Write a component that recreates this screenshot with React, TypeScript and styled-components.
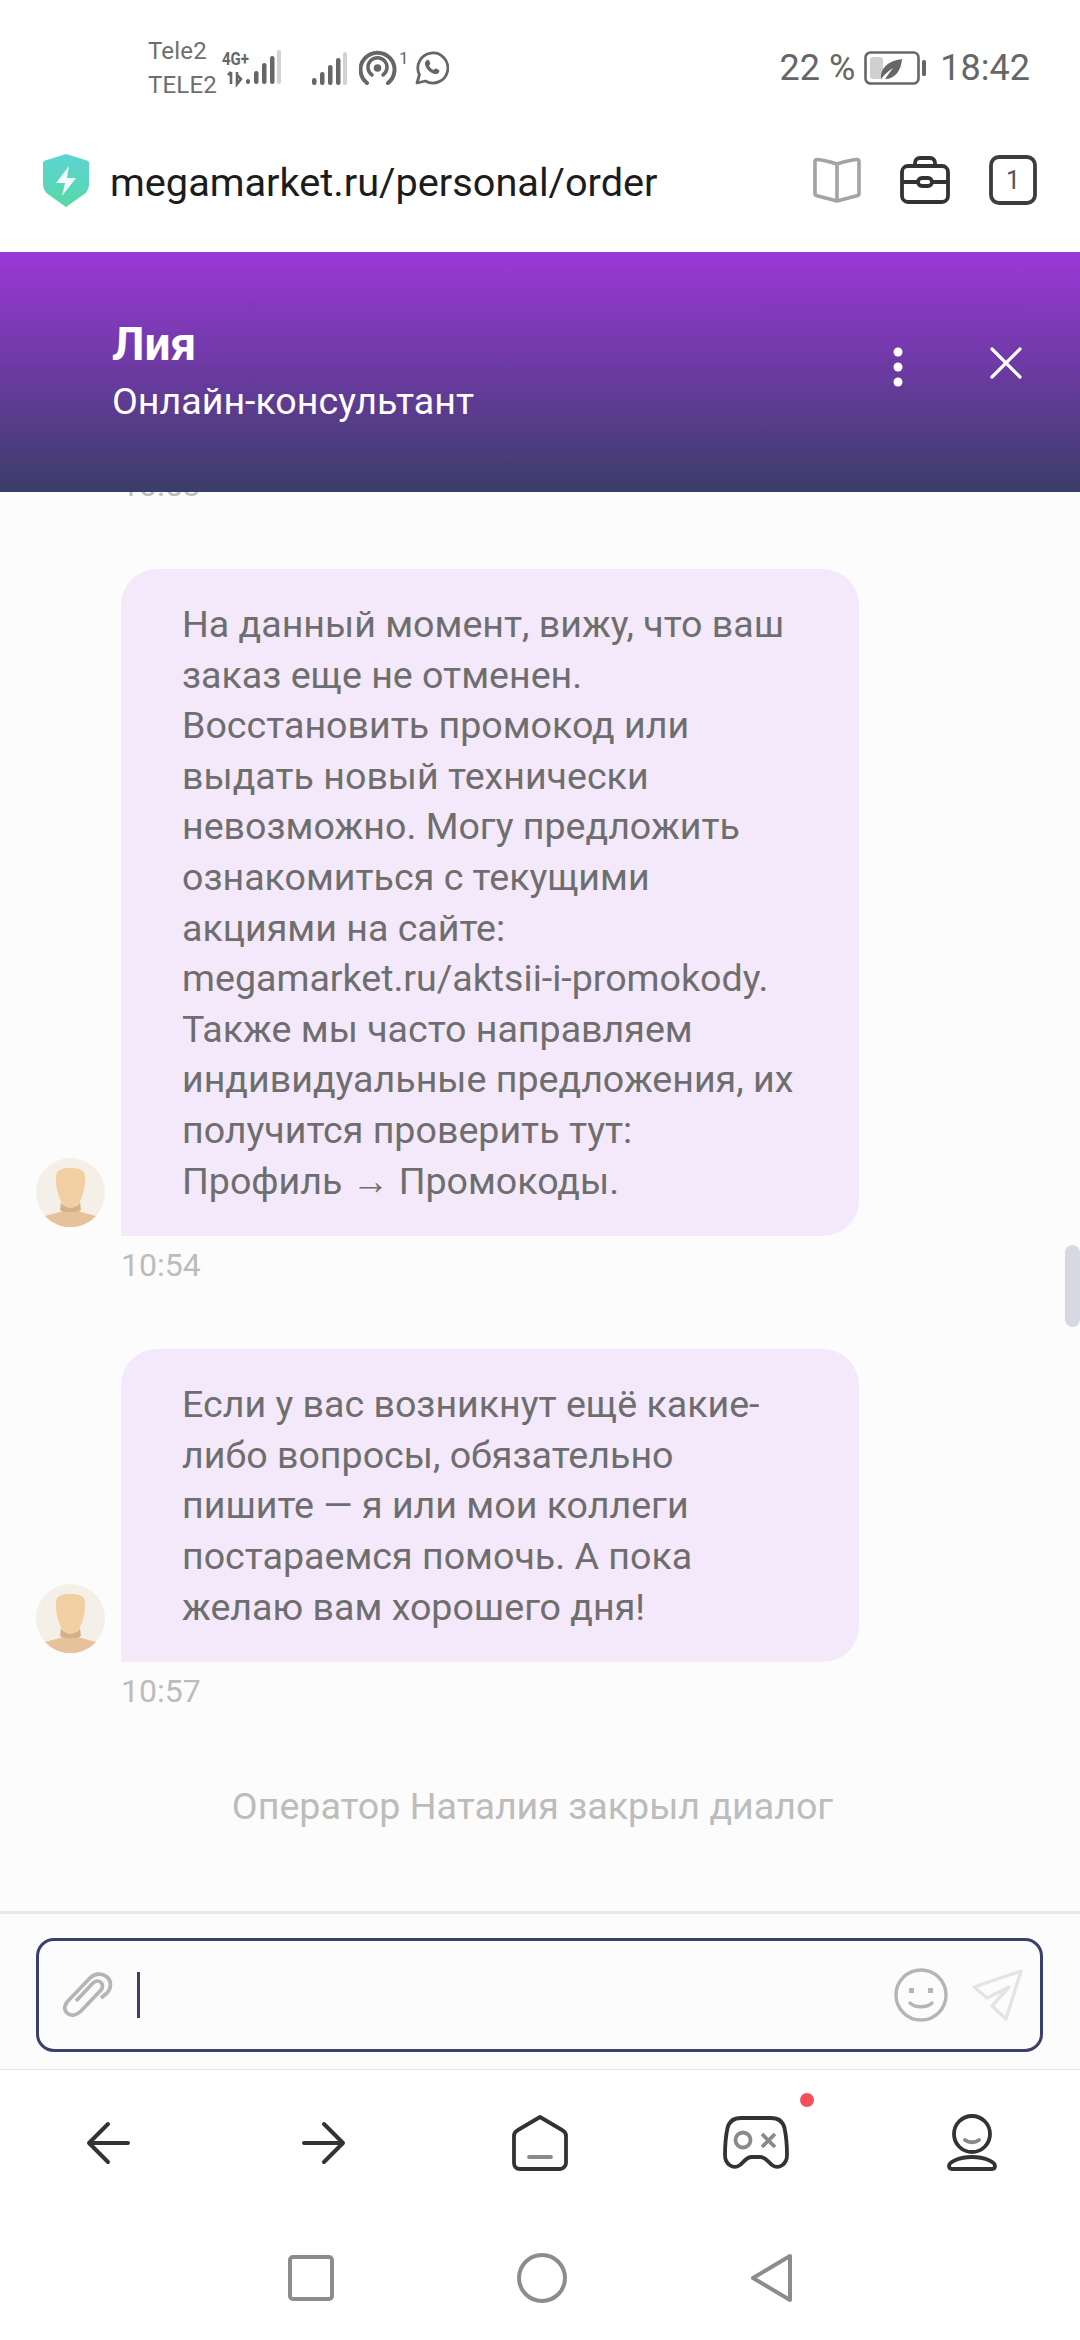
import React from "react";
import styled, { createGlobalStyle } from "styled-components";

const GlobalStyle = createGlobalStyle`
  html, body {
    margin: 0;
    padding: 0;
    background: #fff;
  }
  * {
    box-sizing: border-box;
  }
`;

const Screen = styled.div`
  width: 1080px;
  height: 2340px;
  display: flex;
  flex-direction: column;
  overflow: hidden;
  background: #fff;
  font-family: Roboto, "Liberation Sans", sans-serif;
`;

const StatusBar = styled.div`
  height: 108px;
  flex: none;
  padding: 28px 50px 0 148px;
  display: flex;
  align-items: center;
  color: #666;
`;

const Carriers = styled.div`
  width: 74px;
  font-size: 24px;
  line-height: 34px;
  color: #6e6e6e;
  letter-spacing: 0.2px;
`;

const StatusIcon = styled.svg<{ $left?: number }>`
  display: block;
  flex: none;
  margin-left: ${(p) => p.$left ?? 0}px;
`;

const StatusRight = styled.div`
  margin-left: auto;
  display: flex;
  align-items: center;
  font-size: 36px;
  color: #666;
`;

const Percent = styled.span`
  margin-right: 9px;
`;

const Clock = styled.span`
  margin-left: 14px;
`;

const AddressBar = styled.div`
  height: 144px;
  flex: none;
  padding: 0 43px;
  display: flex;
  align-items: center;
`;

const Url = styled.div`
  margin: 4px 0 0 21px;
  font-size: 39.7px;
  color: #1c1c1c;
  flex: 1;
  white-space: nowrap;
`;

const AddressTools = styled.div`
  display: flex;
  align-items: center;
  gap: 39px;
`;

const ChatHeader = styled.div`
  height: 240px;
  flex: none;
  padding: 0 58px 0 112px;
  display: flex;
  align-items: center;
  background: linear-gradient(180deg, #9b38d8 0%, #3a3d69 100%);
  color: #fff;
`;

const AgentInfo = styled.div`
  flex: 1;
`;

const AgentName = styled.div`
  font-size: 46px;
  line-height: 56px;
  font-weight: 700;
`;

const AgentRole = styled.div`
  margin-top: 2px;
  font-size: 37.6px;
  line-height: 54px;
`;

const HeaderActions = styled.div`
  display: flex;
  align-items: flex-start;
  gap: 87px;
  margin-bottom: 10px;
`;

const Chat = styled.div`
  position: relative;
  flex: 1;
  min-height: 0;
  overflow: hidden;
  background: #fcfcfc;
`;

const MessageList = styled.div`
  margin-top: -26px;
`;

const Row = styled.div`
  display: flex;
  align-items: flex-end;
  padding-left: 36px;
  gap: 16px;
`;

const AvatarIcon = styled.svg`
  display: block;
  flex: none;
  margin-bottom: 9px;
`;

const Bubble = styled.div`
  width: 738px;
  padding: 30px 57px 30px 61px;
  border-radius: 36px 36px 36px 0;
  background: #f4e9fa;
  color: #6e6e6e;
  font-size: 37.6px;
  line-height: 50.6px;
`;

const Time = styled.div<{ $after?: boolean }>`
  margin: ${(p) => (p.$after ? "10px" : "0")} 0 65px 121px;
  font-size: 32px;
  line-height: 38px;
  color: #bcbcbc;
`;

const Closed = styled.div`
  margin-top: 71px;
  padding-right: 15px;
  text-align: center;
  font-size: 37.6px;
  line-height: 50px;
  color: #bcbcbc;
`;

const ScrollThumb = styled.div`
  position: absolute;
  top: 753px;
  right: 0;
  width: 15px;
  height: 82px;
  border-radius: 8px;
  background: #d6d9e3;
`;

const Composer = styled.div`
  flex: none;
  padding: 24px 37px 17px 36px;
  background: #fcfcfc;
  border-top: 3px solid #e9e9e9;
  border-bottom: 1px solid #e6e6e6;
`;

const InputBox = styled.div`
  height: 114px;
  padding: 0 17px 0 24px;
  display: flex;
  align-items: center;
  border: 3px solid #3b3f6b;
  border-radius: 18px;
`;

const Caret = styled.div`
  width: 3px;
  height: 46px;
  margin-left: 24px;
  background: #3b3f6b;
`;

const InputActions = styled.div`
  margin-left: auto;
  display: flex;
  align-items: center;
  gap: 24px;
`;

const BrowserNav = styled.div`
  height: 146px;
  flex: none;
  display: grid;
  grid-template-columns: repeat(5, 1fr);
`;

const NavItem = styled.div`
  position: relative;
  display: flex;
  align-items: center;
  justify-content: center;
`;

const Badge = styled.span`
  position: absolute;
  top: 23px;
  left: 152px;
  width: 14px;
  height: 14px;
  border-radius: 50%;
  background: #f5505a;
`;

const SystemNav = styled.div`
  height: 124px;
  flex: none;
  display: flex;
  align-items: center;
  justify-content: center;
  gap: 183px;
`;

const Signal = ({ left }: { left?: number }) => (
  <StatusIcon $left={left} width="35" height="33" viewBox="0 0 35 33">
    <rect x="0" y="26" width="4.500" height="7" rx="2.200" fill="#666" />
    <rect x="8" y="20" width="4.500" height="13" rx="2.200" fill="#666" />
    <rect x="16" y="13" width="4.500" height="20" rx="2.200" fill="#666" />
    <rect x="24" y="6" width="4.500" height="27" rx="2.200" fill="#666" />
    <rect x="31" y="0" width="4" height="33" rx="2" fill="#d2d2d2" />
  </StatusIcon>
);

const Network = ({ left }: { left?: number }) => (
  <StatusIcon $left={left} width="60" height="44" viewBox="0 -4 60 44">
    <text
      x="0"
      y="15"
      fontFamily="Roboto, sans-serif"
      fontWeight="700"
      fontSize="19"
      fill="#666"
      textLength="27"
      lengthAdjust="spacingAndGlyphs"
    >
      4G+
    </text>
    <path d="M9 22v12M6 25l3-3M15 22v12l4-5-4-4" stroke="#666" strokeWidth="2.600" fill="none" />
    <rect x="24" y="29" width="4" height="5" rx="2" fill="#666" />
    <rect x="32" y="21" width="4.500" height="13" rx="2.200" fill="#666" />
    <rect x="40" y="13" width="4.500" height="21" rx="2.200" fill="#666" />
    <rect x="48" y="6" width="4.500" height="28" rx="2.200" fill="#666" />
    <rect x="55" y="0" width="4" height="34" rx="2" fill="#d2d2d2" />
  </StatusIcon>
);

const Hotspot = ({ left }: { left?: number }) => (
  <StatusIcon $left={left} width="52" height="44" viewBox="0 -4 52 44">
    <path d="M8 33a17 17 0 1 1 21 0" fill="none" stroke="#666" strokeWidth="4" strokeLinecap="round" />
    <path d="M13 25a9.500 9.500 0 1 1 11 0" fill="none" stroke="#666" strokeWidth="3.500" strokeLinecap="round" />
    <circle cx="18.500" cy="18" r="3.800" fill="#666" />
    <text x="40" y="14" fontFamily="Roboto, sans-serif" fontSize="17" fill="#666">
      1
    </text>
  </StatusIcon>
);

const WhatsApp = ({ left }: { left?: number }) => (
  <StatusIcon $left={left} width="34" height="34" viewBox="0 0 34 34">
    <path
      d="M2 32l2.400-8.400A15 15 0 1 1 10.400 30z"
      fill="none"
      stroke="#666"
      strokeWidth="2.800"
      strokeLinejoin="round"
    />
    <path
      d="M11.500 9.500c1-1 2.300-.8 2.800.4l.9 2.200c.2.600 0 1.100-.4 1.600l-.8.900c1 2 2.600 3.500 4.700 4.500l1-1.100c.4-.5 1-.6 1.500-.4l2.300 1.100c.9.400 1.100 1.300.7 2.200-.8 1.800-2.900 2.600-5 2-4.500-1.300-7.600-4.400-9-8.600-.6-1.800-.1-3.700 1.300-4.800z"
      fill="#666"
    />
  </StatusIcon>
);

const Battery = () => (
  <StatusIcon width="62" height="34" viewBox="0 0 62 34">
    <rect x="1.500" y="1.500" width="53" height="31" rx="5" fill="none" stroke="#666" strokeWidth="2.600" />
    <rect x="6" y="6" width="13" height="22" rx="3" fill="#d0d0d0" />
    <path d="M17 28c-1-10 6-18 21-20-1 12-7 20-17 20l8-11c-5 3-9 7-12 11z" fill="#666" />
    <rect x="58" y="9" width="4" height="16" rx="1.500" fill="#666" />
  </StatusIcon>
);

const Shield = () => (
  <svg width="46" height="53" viewBox="0 0 46 53" style={{ display: "block", flex: "none" }}>
    <defs>
      <linearGradient id="shieldFill" x1="0" y1="0" x2="0" y2="1">
        <stop offset="0" stopColor="#5cd4d4" />
        <stop offset="1" stopColor="#57d8a6" />
      </linearGradient>
    </defs>
    <path
      d="M23 0l21 6.500c1.200.4 2 1.400 2 2.700v21c0 4-1.800 7.500-5 10L23 53 5 40.200c-3.200-2.500-5-6-5-10v-21c0-1.300.8-2.300 2-2.700z"
      fill="url(#shieldFill)"
    />
    <path d="M26 12L13 29h9l-3 13 14-18h-9z" fill="#effcfa" />
  </svg>
);

const Book = () => (
  <svg width="48" height="46" viewBox="0 0 48 46" style={{ display: "block" }}>
    <path
      d="M24 7c-6-2-13-4-20-4.500C2.800 2.400 2 3.200 2 4.500v32c0 1.200.7 2 2 2.300L24 44l20-5.200c1.300-.3 2-1.100 2-2.300v-32c0-1.300-.8-2.100-2-2C37 3 30 5 24 7zM24 7v37"
      fill="none"
      stroke="#a3a3a3"
      strokeWidth="3.600"
      strokeLinejoin="round"
    />
  </svg>
);

const Briefcase = () => (
  <svg width="50" height="48" viewBox="0 0 50 48" style={{ display: "block" }}>
    <rect x="2" y="10" width="46" height="36" rx="6" fill="none" stroke="#333" strokeWidth="3.800" />
    <path d="M15 10V7c0-3 2-5 5-5h10c3 0 5 2 5 5v3" fill="none" stroke="#333" strokeWidth="3.800" />
    <path d="M2 26h15M33 26h15" stroke="#333" strokeWidth="3.800" />
    <rect x="18" y="22" width="14" height="8" rx="4" fill="none" stroke="#333" strokeWidth="3.800" />
  </svg>
);

const Tabs = () => (
  <svg width="48" height="50" viewBox="0 0 48 50" style={{ display: "block" }}>
    <rect x="2" y="2" width="44" height="46" rx="8" fill="none" stroke="#3d3d3d" strokeWidth="3.800" />
    <text x="24" y="34" textAnchor="middle" fontFamily="Roboto, sans-serif" fontSize="25" fill="#555">
      1
    </text>
  </svg>
);

const Dots = () => (
  <svg width="10" height="40" viewBox="0 0 10 40" style={{ display: "block" }}>
    <circle cx="5" cy="5" r="4.500" fill="#fff" />
    <circle cx="5" cy="20" r="4.500" fill="#fff" />
    <circle cx="5" cy="35" r="4.500" fill="#fff" />
  </svg>
);

const CloseIcon = () => (
  <svg width="32" height="32" viewBox="0 0 32 32" style={{ display: "block" }}>
    <path d="M2 2l28 28M30 2L2 30" stroke="#fff" strokeWidth="3.200" strokeLinecap="round" />
  </svg>
);

const Avatar = () => (
  <AvatarIcon width="69" height="69" viewBox="0 0 69 69">
    <circle cx="34.500" cy="34.500" r="34.500" fill="#f5f0e7" />
    <path
      d="M9 58l15-4c3-1 5-4 5-7h11c0 3 2 6 5 7l15 4a34.500 34.500 0 0 1-51 0z"
      fill="#e6c29a"
    />
    <path d="M25 44c3 7 16 7 19 0l1 8c-5 3-16 3-21 0z" fill="#d8b088" />
    <path
      d="M34.500 10C42 10 48.500 11 49 18c.5 8-1 16-4 23-2 5-6 9-10.500 9S26 46 24 41c-3-7-4.500-15-4-23 .5-7 7-8 14.500-8z"
      fill="#f2cfa2"
    />
  </AvatarIcon>
);

const Paperclip = () => (
  <svg width="50" height="47" viewBox="0 0 50 47" style={{ display: "block" }}>
    <path
      d="M13 29l17-18c2.500-2.500 6-2.500 8-.5s2 5 0 7.500L18 39c-4 4-10 6-14 2s-2-9 1-12L27 6c5-5 12-5 17-1s4 12 0 16l-6 5"
      fill="none"
      stroke="#b5b5b5"
      strokeWidth="3.800"
    />
  </svg>
);

const Smile = () => (
  <svg width="54" height="54" viewBox="0 0 54 54" style={{ display: "block" }}>
    <circle cx="27" cy="27" r="25" fill="none" stroke="#b5b5b5" strokeWidth="3.400" />
    <rect x="15" y="20" width="5" height="5" fill="#b5b5b5" />
    <rect x="34" y="20" width="5" height="5" fill="#b5b5b5" />
    <path d="M16 35c5 5 17 5 22 0" fill="none" stroke="#b5b5b5" strokeWidth="3.400" strokeLinecap="round" />
  </svg>
);

const Send = () => (
  <svg width="51" height="52" viewBox="0 0 51 52" style={{ display: "block" }}>
    <path
      d="M2 18L49 2 34 50 20 37l17-19-22 11z"
      fill="none"
      stroke="#e4e4e4"
      strokeWidth="3.400"
      strokeLinejoin="round"
    />
  </svg>
);

const BackArrow = () => (
  <svg width="44" height="44" viewBox="0 0 44 44" style={{ display: "block" }}>
    <path
      d="M42 22H3M22 3L3 22l19 19"
      fill="none"
      stroke="#333"
      strokeWidth="4"
      strokeLinecap="round"
      strokeLinejoin="round"
    />
  </svg>
);

const ForwardArrow = () => (
  <svg width="44" height="44" viewBox="0 0 44 44" style={{ display: "block" }}>
    <path
      d="M2 22h39M22 3l19 19-19 19"
      fill="none"
      stroke="#333"
      strokeWidth="4"
      strokeLinecap="round"
      strokeLinejoin="round"
    />
  </svg>
);

const Home = () => (
  <svg width="56" height="56" viewBox="0 0 56 56" style={{ display: "block" }}>
    <path
      d="M28 2L6 15c-2 1-4 3-4 6v27c0 3 2 6 6 6h40c3 0 6-3 6-6V21c0-3-2-5-4-6z"
      fill="none"
      stroke="#333"
      strokeWidth="3.800"
      strokeLinejoin="round"
    />
    <path d="M17 42h22" stroke="#8a8a8a" strokeWidth="3.800" strokeLinecap="round" />
  </svg>
);

const Gamepad = () => (
  <svg width="66" height="54" viewBox="0 0 66 54" style={{ display: "block" }}>
    <path
      d="M18 2h30c8 0 12 4 13.500 10 1.500 7 2.500 16 2.500 27 0 9-8 15-15 10-4-3-6-8-12-8h-8c-6 0-8 5-12 8-7 5-15-1-15-10 0-11 1-20 2.500-27C6 6 10 2 18 2z"
      fill="none"
      stroke="#333"
      strokeWidth="3.800"
    />
    <circle cx="20" cy="24" r="7.500" fill="none" stroke="#8a8a8a" strokeWidth="3.800" />
    <path d="M39 18l13 13M52 18L39 31" stroke="#8a8a8a" strokeWidth="3.800" />
  </svg>
);

const Person = () => (
  <svg width="50" height="58" viewBox="0 0 50 58" style={{ display: "block" }}>
    <ellipse cx="25" cy="20" rx="18" ry="18" fill="none" stroke="#333" strokeWidth="3.800" />
    <path d="M18 26c4 3 10 3 14 0" fill="none" stroke="#8a8a8a" strokeWidth="3.800" strokeLinecap="round" />
    <path
      d="M2 52c0-4 10-9 23-9s23 5 23 9c0 2-1 3-3 3H5c-2 0-3-1-3-3z"
      fill="none"
      stroke="#333"
      strokeWidth="3.800"
      strokeLinejoin="round"
    />
  </svg>
);

const SquareKey = () => (
  <svg width="46" height="46" viewBox="0 0 46 46" style={{ display: "block" }}>
    <rect x="2" y="2" width="42" height="42" rx="3" fill="none" stroke="#8c8c8c" strokeWidth="4" />
  </svg>
);

const CircleKey = () => (
  <svg width="50" height="50" viewBox="0 0 50 50" style={{ display: "block" }}>
    <circle cx="25" cy="25" r="23" fill="none" stroke="#8c8c8c" strokeWidth="4" />
  </svg>
);

const TriangleKey = () => (
  <svg width="43" height="50" viewBox="0 0 43 50" style={{ display: "block" }}>
    <path d="M40 3v44L3 25z" fill="none" stroke="#8c8c8c" strokeWidth="4" strokeLinejoin="round" />
  </svg>
);

const App = () => {
  return (
    <>
      <GlobalStyle />
      <Screen>
        <StatusBar>
          <Carriers>
            Tele2
            <br />
            TELE2
          </Carriers>
          <Network />
          <Signal left={30} />
          <Hotspot left={12} />
          <WhatsApp left={4} />
          <StatusRight>
            <Percent>22 %</Percent>
            <Battery />
            <Clock>18:42</Clock>
          </StatusRight>
        </StatusBar>
        <AddressBar>
          <Shield />
          <Url>megamarket.ru/personal/order</Url>
          <AddressTools>
            <Book />
            <Briefcase />
            <Tabs />
          </AddressTools>
        </AddressBar>
        <ChatHeader>
          <AgentInfo>
            <AgentName>Лия</AgentName>
            <AgentRole>Онлайн-консультант</AgentRole>
          </AgentInfo>
          <HeaderActions>
            <Dots />
            <CloseIcon />
          </HeaderActions>
        </ChatHeader>
        <Chat>
          <MessageList>
            <Time>10:53</Time>
            <Row>
              <Avatar />
              <Bubble>
                На данный момент, вижу, что ваш заказ еще не отменен. Восстановить промокод или выдать
                новый технически невозможно. Могу предложить ознакомиться с текущими акциями на сайте:
                megamarket.ru/aktsii-i-promokody. Также мы часто направляем индивидуальные предложения,
                их получится проверить тут:
                <br />
                Профиль → Промокоды.
              </Bubble>
            </Row>
            <Time $after>10:54</Time>
            <Row>
              <Avatar />
              <Bubble>
                Если у вас возникнут ещё какие-либо вопросы, обязательно пишите — я или мои коллеги
                постараемся помочь. А пока желаю вам хорошего дня!
              </Bubble>
            </Row>
            <Time $after>10:57</Time>
            <Closed>Оператор Наталия закрыл диалог</Closed>
          </MessageList>
          <ScrollThumb />
        </Chat>
        <Composer>
          <InputBox>
            <Paperclip />
            <Caret />
            <InputActions>
              <Smile />
              <Send />
            </InputActions>
          </InputBox>
        </Composer>
        <BrowserNav>
          <NavItem>
            <BackArrow />
          </NavItem>
          <NavItem>
            <ForwardArrow />
          </NavItem>
          <NavItem>
            <Home />
          </NavItem>
          <NavItem>
            <Gamepad />
            <Badge />
          </NavItem>
          <NavItem>
            <Person />
          </NavItem>
        </BrowserNav>
        <SystemNav>
          <SquareKey />
          <CircleKey />
          <TriangleKey />
        </SystemNav>
      </Screen>
    </>
  );
};

export default App;
